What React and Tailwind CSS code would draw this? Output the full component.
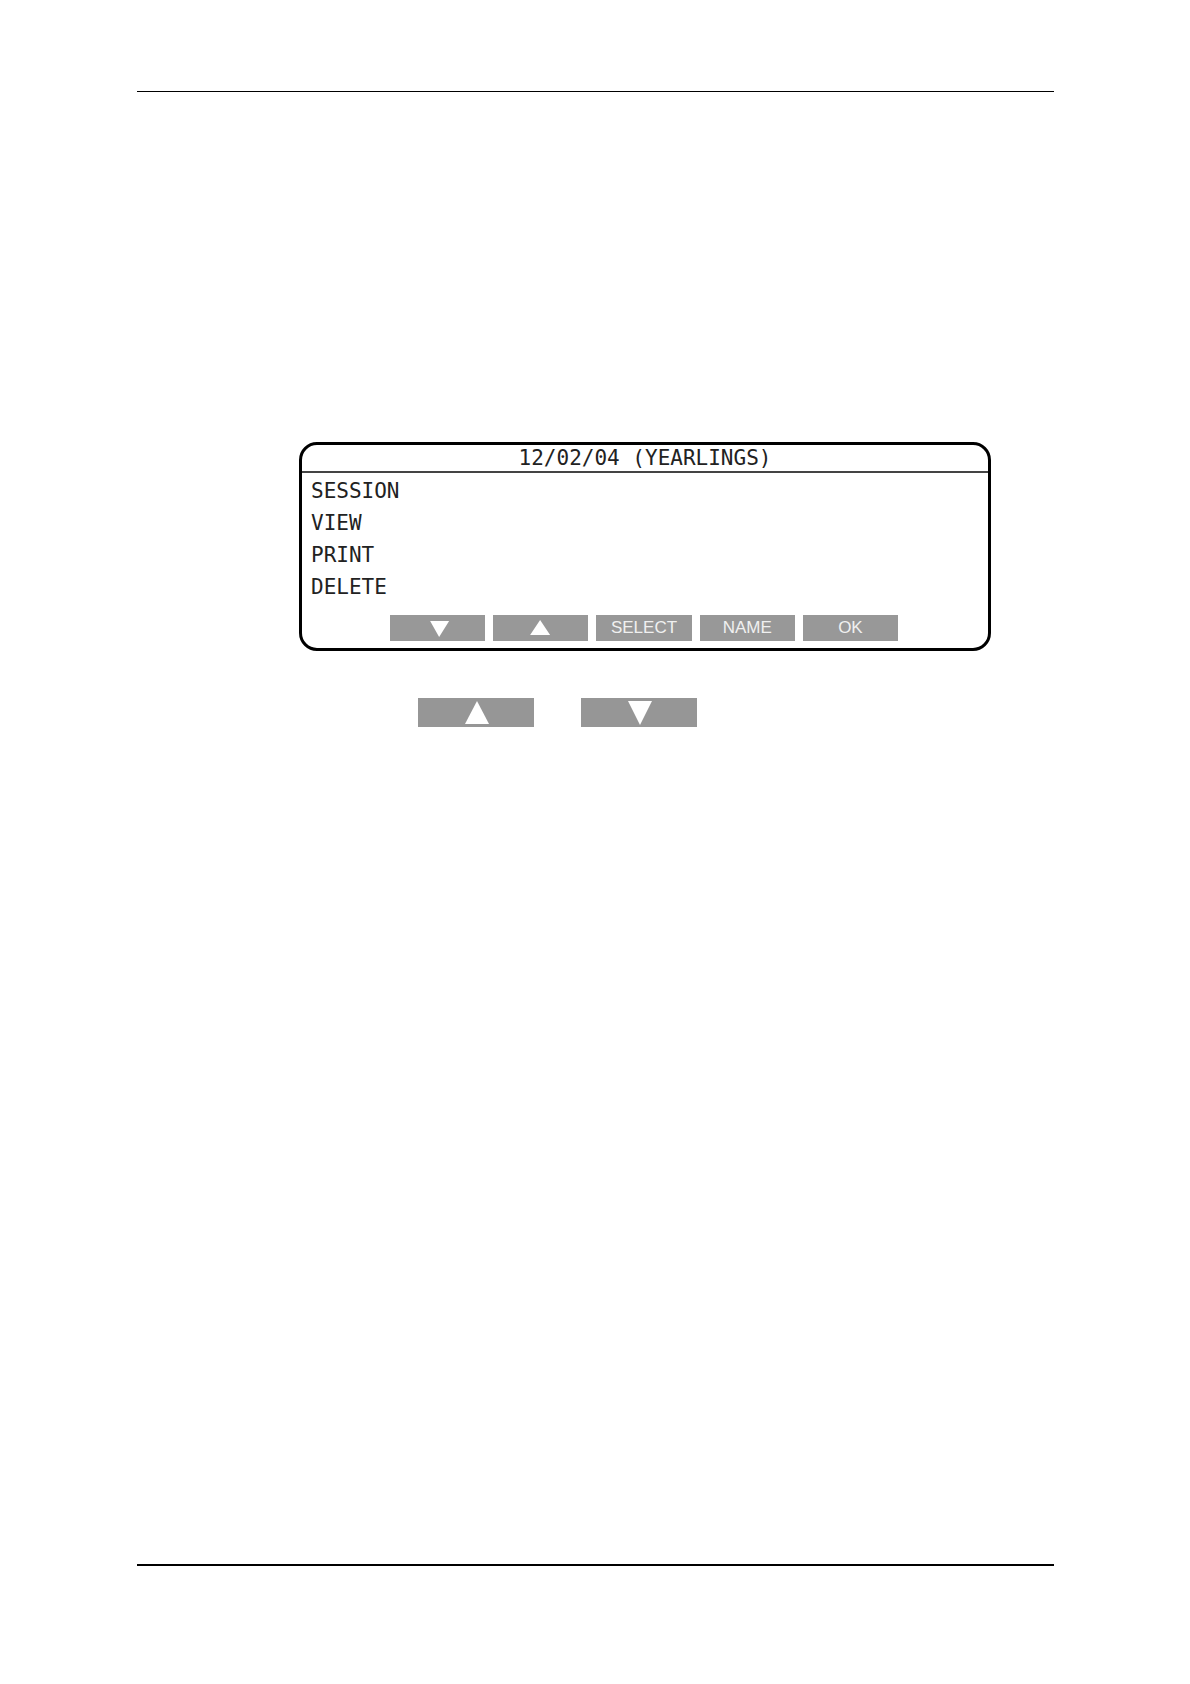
const menuItems = ["SESSION", "VIEW", "PRINT", "DELETE"];

const softKeys = [
  { id: "down", label: "Down", points: "40,6 59,6 49,22" },
  { id: "up", label: "Up", points: "47,5 57,20 37,20" },
  { id: "select", text: "SELECT" },
  { id: "name", text: "NAME" },
  { id: "ok", text: "OK" }
];

const inlineKeys = [
  { id: "up", label: "Up", points: "59,3 71,26 47,26" },
  { id: "down", label: "Down", points: "47,3 71,3 59,27" }
];

function SoftKey({ item }) {
  return (
    <button
      type="button"
      aria-label={item.label}
      className="flex h-[26px] flex-1 items-center justify-center bg-[#989898] font-['Liberation_Sans',Arial,sans-serif] text-[17px] leading-[26px] text-[#f0f0f0]"
    >
      {item.text || (
        <svg viewBox="0 0 95 26" className="h-full w-full" fill="white" aria-hidden="true">
          <polygon points={item.points} />
        </svg>
      )}
    </button>
  );
}

function DisplayPanel() {
  return (
    <section className="mr-[63px] ml-[162px] rounded-[18px] border-3 border-black pb-[7px] font-['DejaVu_Sans_Mono','Liberation_Mono',monospace] text-[21px] text-[#222]">
      <h1 className="border-b-2 border-[#444] text-center leading-[26px]">12/02/04 (YEARLINGS)</h1>
      <ul className="px-[9px] pt-0.5 leading-8">
        {menuItems.map((item) => (
          <li key={item}>{item}</li>
        ))}
      </ul>
      <div className="mt-3 ml-[88px] flex w-[508px] gap-2">
        {softKeys.map((item) => (
          <SoftKey key={item.id} item={item} />
        ))}
      </div>
    </section>
  );
}

export default function App() {
  return (
    <main className="flex min-h-screen flex-col bg-white pt-[91px] pr-[136px] pb-[118px] pl-[137px]">
      <div role="separator" className="h-px shrink-0 bg-black" />
      <div className="pt-[350px] pb-20">
        <DisplayPanel />
        <div className="mt-[47px] ml-[281px] flex gap-[47px]">
          {inlineKeys.map((item) => (
            <button key={item.id} type="button" aria-label={item.label} className="h-[29px] w-[116px] bg-[#969696]">
              <svg viewBox="0 0 116 29" className="h-full w-full" fill="white" aria-hidden="true">
                <polygon points={item.points} />
              </svg>
            </button>
          ))}
        </div>
      </div>
      <div role="separator" className="mt-auto h-0.5 shrink-0 bg-black" />
    </main>
  );
}
